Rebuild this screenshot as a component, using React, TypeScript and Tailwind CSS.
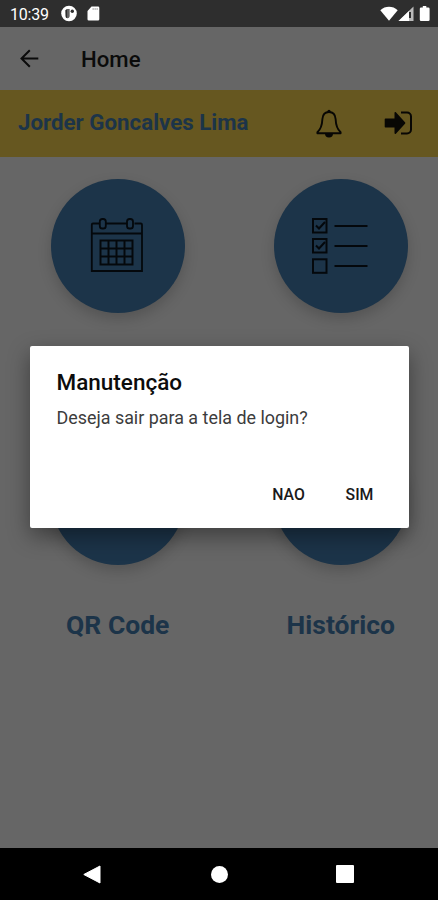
import type { ReactNode } from 'react';

interface MenuTileProps {
  label?: string;
  children?: ReactNode;
}

function MenuTile({ label, children }: MenuTileProps) {
  return (
    <div className="flex h-[252px] w-[133.5px] flex-col items-center">
      <div className="flex h-[133.5px] w-[133.5px] shrink-0 items-center justify-center rounded-full bg-[#1c3449] shadow-[0_6px_14px_rgba(0,0,0,0.18)]">
        {children}
      </div>
      {label && (
        <span className="mt-[42.5px] text-[26.5px] leading-[36px] font-bold whitespace-nowrap text-[#1c3449]">
          {label}
        </span>
      )}
    </div>
  );
}

function CalendarIcon() {
  return (
    <svg width="54" height="56" viewBox="0 0 54 56" fill="none" stroke="#04080c" strokeWidth="1.8" className="-mt-[2px] -ml-px">
      <path d="M9.5 6.5H3a1.2 1.2 0 0 0-1.2 1.2V54H52V7.7a1.2 1.2 0 0 0-1.2-1.2h-6.3M16 6.5h21.5M1.8 16.5H52" />
      <rect x="9.8" y="2" width="6" height="9.5" rx="2.6" />
      <rect x="37" y="2" width="6" height="9.5" rx="2.6" />
      <path d="M10.5 23.5h32v24h-32zM18.5 23.5v24M26.5 23.5v24M34.5 23.5v24M10.5 31.5h32M10.5 39.5h32" strokeWidth="2" />
    </svg>
  );
}

function ChecklistIcon() {
  return (
    <svg width="58" height="58" viewBox="0 0 58 58" fill="none" stroke="#04080c" strokeWidth="2" className="-ml-px">
      <rect x="2" y="2" width="13.5" height="13.5" />
      <rect x="2" y="22" width="13.5" height="13.5" />
      <rect x="2" y="42.3" width="13.5" height="13.5" />
      <path d="M5 8.5l3 3 6-6.5M5 28.5l3 3 6-6.5" />
      <path d="M23.5 9h33M23.5 29h33M23.5 49h33" />
    </svg>
  );
}

function StatusBar() {
  return (
    <div className="flex h-[27px] shrink-0 items-center bg-[#2e2e2e] pr-2 pl-[10px] text-white">
      <span className="w-[51px] pt-[2px] text-[16px] leading-none tracking-[-0.2px]">10:39</span>
      <svg width="17" height="17" viewBox="0 0 17 17">
        <circle cx="8" cy="8.5" r="7.8" fill="#fff" />
        <path d="M4.3 5.3L6 4h2.5v7.2a2 2 0 0 1-4 0z" fill="#2e2e2e" />
        <circle cx="11.3" cy="6.3" r="1.7" fill="#2e2e2e" />
        <path d="M7 2.5v11" stroke="#fff" strokeWidth="0.5" />
      </svg>
      <svg width="13" height="15" viewBox="0 0 13 15" className="ml-[9px]">
        <path d="M4.5 0.5H11a1.3 1.3 0 0 1 1.3 1.3v11.4a1.3 1.3 0 0 1-1.3 1.3H1.8a1.3 1.3 0 0 1-1.3-1.3V5z" fill="#fff" />
        <path d="M5.5 3H11" stroke="#777" strokeWidth="1.2" strokeDasharray="1.3 0.7" />
      </svg>
      <svg width="50" height="17" viewBox="0 0 50 17" className="ml-auto">
        <path d="M0.3 5.2C5.2 0.6 12.8 0.6 17.7 5.2L9 15.8z" fill="#fff" />
        <path d="M18.5 16L33.5 1.5V16z" fill="#bbb" />
        <path d="M18.5 16L29 6v10z" fill="#fff" />
        <path d="M30 7v6" stroke="#2e2e2e" strokeWidth="2" />
        <path d="M42.8 1h3.5v1.5h2a1.3 1.3 0 0 1 1.3 1.3v10.9a1.3 1.3 0 0 1-1.3 1.3h-7.2a1.3 1.3 0 0 1-1.3-1.3V3.800a1.300 1.300 0 0 1 1.300-1.300h1.700z" fill="#fff" />
      </svg>
    </div>
  );
}

function AppBar() {
  return (
    <header className="flex h-[63px] shrink-0 items-center pl-5 text-[#0b0b0b]">
      <svg width="19" height="19" viewBox="0 0 19 19" fill="none" stroke="currentColor" strokeWidth="2">
        <path d="M18.3 9.5H2M9.8 1.2L1.5 9.5l8.3 8.3" />
      </svg>
      <h1 className="ml-[42px] pt-[2px] text-[22.2px] font-medium">Home</h1>
    </header>
  );
}

function UserBar() {
  return (
    <div className="flex h-[67px] shrink-0 items-center bg-[#665720] pr-[26px] pl-[18px]">
      <span className="pb-[2px] text-[22.3px] font-bold whitespace-nowrap text-[#1c3449]">Jorder Goncalves Lima</span>
      <svg width="26" height="29" viewBox="0 0 26 29" fill="none" stroke="#080704" strokeWidth="1.9" strokeLinejoin="round" className="ml-auto">
        <path d="M13 3c4.2 0 6.3 3 6.600 7 .3 6.500 1.200 10 5 13.200v1H1.400v-1C5.200 20 6.100 16.500 6.400 10 6.700 6 8.800 3 13 3z" />
        <circle cx="13" cy="2.3" r="1.6" fill="#080704" stroke="none" />
        <path d="M9 24.5h8a4 4 0 0 1-8 0z" fill="#080704" stroke="none" />
      </svg>
      <svg width="28" height="26" viewBox="0 0 28 26" className="mb-[2px] ml-[42px]">
        <path d="M1.5 8.5h9V2.800c0-.9.8-1.200 1.400-.6L21 12.200c.5.500.5 1 0 1.500l-9.100 10c-.6.600-1.400.3-1.400-.6V17.500h-9A.8.800 0 0 1 .7 16.700V9.300a.8.800 0 0 1 .8-.8z" fill="#080704" />
        <path d="M17 2.5h6a4 4 0 0 1 4 4v13a4 4 0 0 1-4 4h-6" fill="none" stroke="#080704" strokeWidth="2" />
      </svg>
    </div>
  );
}

function LogoutDialog() {
  return (
    <div className="absolute inset-x-0 top-[346px] flex justify-center">
      <div
        role="alertdialog"
        className="flex h-[182px] w-[379px] flex-col rounded-[2px] bg-white pt-5 pr-[14px] pb-[15px] pl-[27px] shadow-[0_8px_22px_rgba(0,0,0,0.4)]"
      >
        <h2 className="text-[22.5px] leading-[32px] font-medium text-[#0c0c0c]">Manutenção</h2>
        <p className="mt-[7px] text-[17.9px] leading-[26px] text-[#3c3c3c]">Deseja sair para a tela de login?</p>
        <div className="mt-auto flex justify-end text-[15.8px] font-medium text-[#1a1a1a]">
          <button className="h-9 w-[70px]">NAO</button>
          <button className="ml-px h-9 w-[70px]">SIM</button>
        </div>
      </div>
    </div>
  );
}

function NavigationBar() {
  return (
    <nav className="flex h-[52px] shrink-0 items-center justify-between bg-black pr-[84px] pl-[83px]">
      <svg width="18" height="19" viewBox="0 0 18 19">
        <path d="M0.8 9.5L17 1v17z" fill="#fff" stroke="#fff" strokeLinejoin="round" />
      </svg>
      <div className="ml-px h-[17px] w-[17px] rounded-full bg-white" />
      <div className="h-[18px] w-[18px] rounded-[1px] bg-white" />
    </nav>
  );
}

export default function App() {
  return (
    <div className="relative flex h-[900px] w-[438px] flex-col overflow-hidden bg-[#666666] font-[Roboto,sans-serif]">
      <StatusBar />
      <AppBar />
      <UserBar />

      {/* Home menu */}
      <main className="flex-1 pt-[22px] pr-[30.5px] pl-[51px]">
        <div className="flex justify-between">
          <MenuTile>
            <CalendarIcon />
          </MenuTile>
          <MenuTile>
            <ChecklistIcon />
          </MenuTile>
        </div>
        <div className="flex justify-between">
          <MenuTile label="QR Code" />
          <MenuTile label="Histórico" />
        </div>
      </main>

      <NavigationBar />
      <LogoutDialog />
    </div>
  );
}
